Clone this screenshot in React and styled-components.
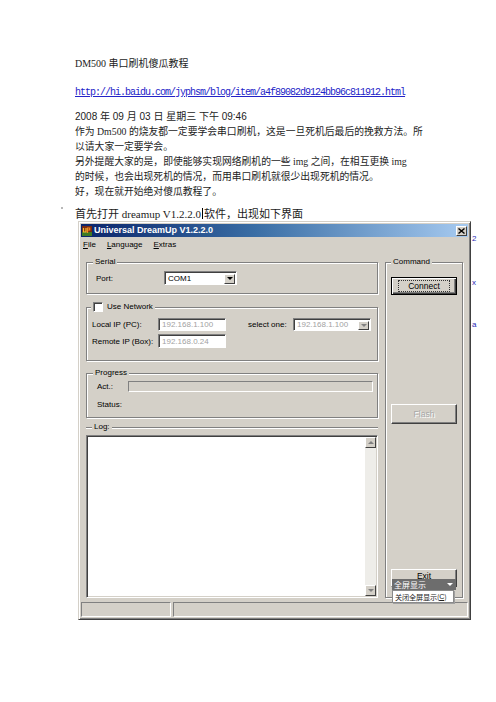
import React from 'react'
import styled, { createGlobalStyle } from 'styled-components'

const GlobalStyle = createGlobalStyle`
  html, body {
    margin: 0;
    padding: 0;
    background: #fff;
  }
  body {
    font-family: "Liberation Serif", "Noto Sans CJK SC", serif;
  }
`

const docFont = `"Liberation Serif", "Noto Sans CJK SC", serif`
const uiFont = `"Liberation Sans", Arial, sans-serif`

/* ---------- blog text ---------- */

const Page = styled.div`
  padding: 57px 0 40px 75px;
  color: #1c1c1c;
`

const Heading = styled.div`
  font-family: ${docFont};
  font-size: 10px;
  line-height: 14px;
`

const Url = styled.a`
  display: block;
  margin-top: 15px;
  font-family: "Liberation Mono", monospace;
  font-size: 10px;
  letter-spacing: -1px;
  line-height: 14px;
  color: #2323c8;
  text-decoration: underline;
  white-space: nowrap;
`

const DateLine = styled.div`
  margin-top: 10px;
  font-family: "Liberation Sans", "Noto Sans CJK SC", sans-serif;
  font-size: 10px;
  line-height: 14px;
`

const Para = styled.div`
  font-family: ${docFont};
  font-size: 9.8px;
  line-height: 15px;
`

const Line = styled.div`
  white-space: nowrap;
`

const Caption = styled.div`
  margin-top: 8px;
  font-family: ${docFont};
  font-size: 11px;
  line-height: 14px;
  white-space: nowrap;
`

const Tick = styled.span`
  display: inline-block;
  width: 2px;
  height: 2px;
  margin-left: -14px;
  margin-right: 12px;
  background: #b8b8b8;
  vertical-align: 9px;
`

const Caret = styled.span`
  display: inline-block;
  width: 1px;
  height: 11px;
  margin: 0 1px;
  background: #000;
  vertical-align: -1px;
`

/* ---------- DreamUp window ---------- */

const Shot = styled.div`
  display: flex;
  align-items: flex-start;
`

const Win = styled.div`
  width: 393px;
  margin-left: 3px;
  box-sizing: border-box;
  padding: 2px;
  background: #d4d0c8;
  border: 1px solid;
  border-color: #d4d0c8 #404040 #404040 #d4d0c8;
  box-shadow: inset 1px 1px 0 #fff, inset -1px -1px 0 #808080;
  font-family: ${uiFont};
  font-size: 8px;
  color: #000;
`

const TitleBar = styled.div`
  height: 13px;
  display: flex;
  align-items: center;
  gap: 2px;
  padding: 0 1px;
  background: linear-gradient(90deg, #0a246a 0%, #3a6ea5 45%, #a6caf0 100%);
`

const TitleText = styled.div`
  flex: 1;
  color: #fff;
  font-weight: bold;
  font-size: 9px;
  line-height: 13px;
  white-space: nowrap;
`

const CloseBtn = styled.div`
  width: 11px;
  height: 10px;
  box-sizing: border-box;
  display: flex;
  align-items: center;
  justify-content: center;
  background: #d4d0c8;
  border: 1px solid;
  border-color: #fff #404040 #404040 #fff;
`

const MenuBar = styled.div`
  height: 15px;
  display: flex;
  align-items: center;
  gap: 11px;
  padding-left: 2px;
`

const MenuItem = styled.span`
  &::first-letter {
    text-decoration: underline;
  }
`

const Body = styled.div`
  height: 346px;
  display: flex;
  gap: 7px;
  padding: 0 5px;
`

const LeftCol = styled.div`
  width: 292px;
  display: flex;
  flex-direction: column;
`

const GroupBox = styled.div`
  margin-top: ${p => p.$mt}px;
  padding-bottom: ${p => p.$pb || 0}px;
  border: 1px solid #808080;
  box-shadow: 1px 1px 0 #fff, inset 1px 1px 0 #fff;
`

const LogBox = styled.div`
  flex: 1;
  margin-top: 9px;
  display: flex;
  flex-direction: column;
  border-top: 1px solid #808080;
  box-shadow: inset 0 1px 0 #fff;
`

const CommandBox = styled(GroupBox)`
  width: 78px;
  box-sizing: border-box;
  display: flex;
  flex-direction: column;
  padding: 0 5px 10px;
`

const GroupTitle = styled.div`
  display: flex;
  align-items: center;
  gap: 4px;
  align-self: flex-start;
  width: max-content;
  margin: -7px 0 0 ${p => p.$ml}px;
  padding: 0 2px;
  line-height: 12px;
  background: #d4d0c8;
`

const Row = styled.div`
  display: flex;
  align-items: center;
  height: ${p => p.$h}px;
  margin-top: ${p => p.$mt}px;
  padding-left: ${p => p.$pl}px;
  padding-right: ${p => p.$pr || 0}px;
`

const Label = styled.span`
  width: ${p => p.$w}px;
  margin-left: ${p => p.$ml || 0}px;
  flex-shrink: 0;
  white-space: nowrap;
`

const Field = styled.div`
  width: ${p => p.$w}px;
  height: 100%;
  box-sizing: border-box;
  display: flex;
  align-items: center;
  padding-left: 3px;
  background: #fff;
  border: 1px solid;
  border-color: #808080 #fff #fff #808080;
  box-shadow: inset 1px 1px 0 #404040;
  color: ${p => (p.$disabled ? '#a2a2a2' : '#000')};
  white-space: nowrap;
`

const Combo = styled(Field)`
  padding-right: 1px;
  justify-content: space-between;
`

const DropBtn = styled.div`
  width: 11px;
  height: calc(100% - 2px);
  box-sizing: border-box;
  margin-top: 1px;
  display: flex;
  align-items: center;
  justify-content: center;
  background: #d4d0c8;
  border: 1px solid;
  border-color: #fff #404040 #404040 #fff;
  &::after {
    content: '';
    border-left: 3px solid transparent;
    border-right: 3px solid transparent;
    border-top: 3px solid ${p => (p.$disabled ? '#808080' : '#000')};
  }
`

const Check = styled.span`
  width: 10px;
  height: 10px;
  box-sizing: border-box;
  background: #fff;
  border: 1px solid;
  border-color: #808080 #fff #fff #808080;
  box-shadow: inset 1px 1px 0 #404040;
`

const Bar = styled.div`
  flex: 1;
  height: 100%;
  box-sizing: border-box;
  border: 1px solid;
  border-color: #808080 #fff #fff #808080;
`

const LogArea = styled.div`
  flex: 1;
  margin-top: 2px;
  display: flex;
  justify-content: flex-end;
  background: #fff;
  border: 1px solid;
  border-color: #808080 #fff #fff #808080;
  box-shadow: inset 1px 1px 0 #404040, inset -1px -1px 0 #d4d0c8;
  padding: 1px 1px 1px 0;
`

const ScrollBar = styled.div`
  width: 11px;
  display: flex;
  flex-direction: column;
  justify-content: space-between;
  background: #eeede9;
`

const ArrowBtn = styled.div`
  height: 11px;
  box-sizing: border-box;
  display: flex;
  align-items: center;
  justify-content: center;
  background: #d4d0c8;
  border: 1px solid;
  border-color: #fff #404040 #404040 #fff;
  &::after {
    content: '';
    border-left: 3px solid transparent;
    border-right: 3px solid transparent;
    ${p => (p.$up ? 'border-bottom' : 'border-top')}: 3px solid #808080;
  }
`

const Btn = styled.div`
  position: relative;
  height: ${p => p.$h}px;
  margin-top: ${p => (p.$mt === 'auto' ? 'auto' : `${p.$mt}px`)};
  box-sizing: border-box;
  display: flex;
  align-items: ${p => (p.$top ? 'flex-start' : 'center')};
  justify-content: center;
  padding-top: ${p => (p.$top ? '1px' : '0')};
  background: #d4d0c8;
  border: 1px solid;
  border-color: ${p => (p.$default ? '#000' : '#fff #404040 #404040 #fff')};
  box-shadow: ${p =>
    p.$default
      ? 'inset 1px 1px 0 #fff, inset -1px -1px 0 #404040, inset -2px -2px 0 #808080'
      : 'inset -1px -1px 0 #808080'};
  color: ${p => (p.$disabled ? '#a8a8a8' : '#000')};
  text-shadow: ${p => (p.$disabled ? '1px 1px 0 #fff' : 'none')};
  font-size: 8.5px;
  line-height: 10px;
`

const FocusRing = styled.span`
  padding: 0 9px;
  line-height: 10px;
  border: 1px dotted #333;
`

/* full-screen toggle that sits over the Exit button */
const ScreenPopup = styled.div`
  position: absolute;
  top: 9px;
  left: 0;
  width: 64px;
  font-family: "Noto Sans CJK SC", sans-serif;
  font-size: 8px;
  text-shadow: none;
  z-index: 2;
`

const PopupBar = styled.div`
  height: 11px;
  display: flex;
  align-items: center;
  justify-content: space-between;
  padding: 0 3px 0 2px;
  background: #6d6d6d;
  color: #fff;
  line-height: 11px;
  &::after {
    content: '';
    border-left: 3px solid transparent;
    border-right: 3px solid transparent;
    border-top: 3px solid #fff;
  }
`

const PopupMenu = styled.div`
  width: 62px;
  height: 13px;
  box-sizing: border-box;
  display: flex;
  align-items: center;
  padding-left: 2px;
  background: #fff;
  border: 1px solid #8a8a8a;
  box-shadow: 1px 1px 0 #a0a0a0;
  color: #222;
  font-size: 7.2px;
  letter-spacing: -0.2px;
  white-space: nowrap;
  overflow: hidden;
  u {
    font-family: ${uiFont};
  }
`

const StatusBar = styled.div`
  height: 15px;
  margin-top: 4px;
  display: flex;
  gap: 2px;
`

const StatusPanel = styled.div`
  width: ${p => (p.$w ? `${p.$w}px` : 'auto')};
  flex: ${p => (p.$w ? '0 0 auto' : '1')};
  box-sizing: border-box;
  border: 1px solid;
  border-color: #808080 #fff #fff #808080;
`

const Bleed = styled.div`
  display: flex;
  flex-direction: column;
  padding-top: 13px;
  margin-left: 1px;
  font-family: "Liberation Sans", sans-serif;
  font-size: 8px;
  line-height: 10px;
  color: #2a2ab4;
`

const BleedChar = styled.span`
  margin-top: ${p => p.$mt}px;
`

function AppIcon() {
  return (
    <svg width="10" height="10" viewBox="0 0 10 10">
      <rect x="0" y="0" width="10" height="10" fill="#7a2a10" />
      <rect x="0" y="6" width="10" height="4" fill="#3f7a22" />
      <path d="M1.5 2v4h2.5V2" fill="none" stroke="#f5c030" strokeWidth="1.2" />
      <path d="M5.5 7V2h2.2v2H5.5" fill="none" stroke="#f08a20" strokeWidth="1.2" />
    </svg>
  )
}

function CloseGlyph() {
  return (
    <svg width="7" height="6" viewBox="0 0 7 6">
      <path d="M0.5 0.5l6 5M6.5 0.5l-6 5" stroke="#000" strokeWidth="1.4" />
    </svg>
  )
}

function DreamUpWindow() {
  return (
    <Win>
      <TitleBar>
        <AppIcon />
        <TitleText>Universal DreamUp V1.2.2.0</TitleText>
        <CloseBtn><CloseGlyph /></CloseBtn>
      </TitleBar>

      <MenuBar>
        <MenuItem>File</MenuItem>
        <MenuItem>Language</MenuItem>
        <MenuItem>Extras</MenuItem>
      </MenuBar>

      <Body>
        <LeftCol>
          <GroupBox $mt={10} $pb={8}>
            <GroupTitle $ml={6}>Serial</GroupTitle>
            <Row $h={14} $mt={3} $pl={9}>
              <Label $w={68}>Port:</Label>
              <Combo $w={73}>
                COM1
                <DropBtn />
              </Combo>
            </Row>
          </GroupBox>

          <GroupBox $mt={13} $pb={12}>
            <GroupTitle $ml={4}>
              <Check />
              Use Network
            </GroupTitle>
            <Row $h={13} $mt={5} $pl={5}>
              <Label $w={66}>Local IP (PC):</Label>
              <Field $w={68} $disabled>192.168.1.100</Field>
              <Label $w={45} $ml={22}>select one:</Label>
              <Combo $w={78} $disabled>
                192.168.1.100
                <DropBtn $disabled />
              </Combo>
            </Row>
            <Row $h={14} $mt={3} $pl={5}>
              <Label $w={66}>Remote IP (Box):</Label>
              <Field $w={68} $disabled>192.168.0.24</Field>
            </Row>
          </GroupBox>

          <GroupBox $mt={12} $pb={7}>
            <GroupTitle $ml={6}>Progress</GroupTitle>
            <Row $h={11} $mt={2} $pl={10} $pr={4}>
              <Label $w={31}>Act.:</Label>
              <Bar />
            </Row>
            <Row $h={12} $mt={6} $pl={10}>
              <Label $w={40}>Status:</Label>
            </Row>
          </GroupBox>

          <LogBox>
            <GroupTitle $ml={6}>Log:</GroupTitle>
            <LogArea>
              <ScrollBar>
                <ArrowBtn $up />
                <ArrowBtn />
              </ScrollBar>
            </LogArea>
          </LogBox>
        </LeftCol>

        <CommandBox $mt={10}>
          <GroupTitle $ml={0}>Command</GroupTitle>
          <Btn $h={18} $mt={9} $default>
            <FocusRing>Connect</FocusRing>
          </Btn>
          <Btn $h={20} $mt={109} $disabled>Flash</Btn>
          <Btn $h={18} $mt="auto" $top>
            Exit
            <ScreenPopup>
              <PopupBar>全屏显示</PopupBar>
              <PopupMenu>关闭全屏显示(<u>C</u>)</PopupMenu>
            </ScreenPopup>
          </Btn>
        </CommandBox>
      </Body>

      <StatusBar>
        <StatusPanel $w={90} />
        <StatusPanel />
      </StatusBar>
    </Win>
  )
}

export default function App() {
  return (
    <>
      <GlobalStyle />
      <Page>
        <Heading>DM500 串口刷机傻瓜教程</Heading>
        <Url href="#">http://hi.baidu.com/jyphsm/blog/item/a4f89082d9124bb96c811912.html</Url>
        <DateLine>2008 年 09 月 03 日 星期三 下午 09:46</DateLine>
        <Para>
          <Line>作为 Dm500 的烧友都一定要学会串口刷机，这是一旦死机后最后的挽救方法。所</Line>
          <Line>以请大家一定要学会。</Line>
          <Line>另外提醒大家的是，即使能够实现网络刷机的一些 img 之间，在相互更换 img</Line>
          <Line>的时候，也会出现死机的情况，而用串口刷机就很少出现死机的情况。</Line>
          <Line>好，现在就开始绝对傻瓜教程了。</Line>
        </Para>
        <Caption>
          <Tick />
          首先打开 dreamup V1.2.2.0<Caret />软件，出现如下界面
        </Caption>
        <Shot>
          <DreamUpWindow />
          <Bleed>
            <BleedChar $mt={0}>2</BleedChar>
            <BleedChar $mt={34}>x</BleedChar>
            <BleedChar $mt={32}>a</BleedChar>
          </Bleed>
        </Shot>
      </Page>
    </>
  )
}
